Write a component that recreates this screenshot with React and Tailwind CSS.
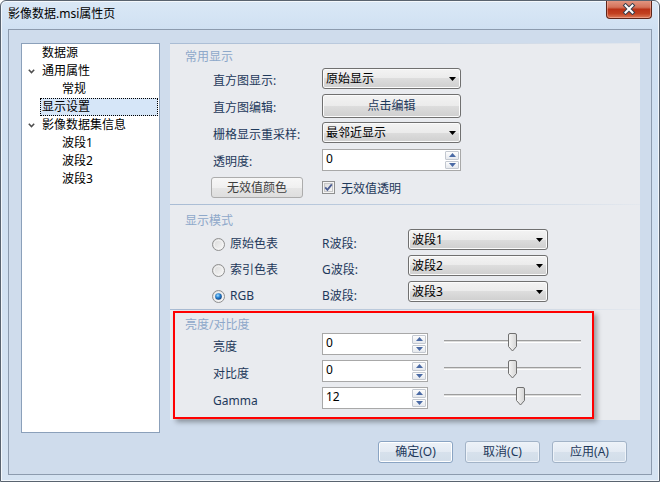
const navy = 'text-[#1e395b]';

function Arrow() {
  return (
    <svg width="7" height="4" viewBox="0 0 7 4">
      <polygon points="0,0 7,0 3.5,4" fill="#000" />
    </svg>
  );
}

function Combo({ text, className = '' }) {
  return (
    <div
      className={`flex h-[21px] items-center justify-between rounded-[3px] border border-[#707070] bg-[linear-gradient(#f3f3f3,#ebebeb_50%,#dddddd_50%,#cfcfcf)] pl-[3px] pr-[4px] text-black shadow-[inset_0_0_0_1px_#fbfbfb] ${className}`}
    >
      <span className="leading-[16px]">{text}</span>
      <Arrow />
    </div>
  );
}

function SpinBtn({ up }) {
  return (
    <div className="flex flex-1 items-center justify-center rounded-[1px] border border-[#c3c8d0] bg-[linear-gradient(#fdfdfd,#e6e9ee)]">
      <svg width="7" height="4" viewBox="0 0 7 4">
        <polygon points={up ? '0,4 7,4 3.5,0' : '0,0 7,0 3.5,4'} fill="#4a6aa5" />
      </svg>
    </div>
  );
}

function Spin({ value, className = '' }) {
  return (
    <div className={`flex h-[22px] border border-[#a8a8a8] bg-white ${className}`}>
      <div className="flex-1 pl-[3px] leading-[18px] text-black">{value}</div>
      <div className="flex w-[15px] flex-col gap-px py-[1px] pr-[1px]">
        <SpinBtn up />
        <SpinBtn />
      </div>
    </div>
  );
}

function Radio({ checked }) {
  return (
    <svg width="13" height="13" viewBox="0 0 13 13">
      <defs>
        <linearGradient id="rb" x1="0" y1="0" x2="1" y2="1">
          <stop offset="0" stopColor="#d6d6d6" />
          <stop offset="1" stopColor="#fbfbfb" />
        </linearGradient>
        <radialGradient id="rd" cx="0.4" cy="0.35" r="0.7">
          <stop offset="0" stopColor="#a9e0ff" />
          <stop offset="0.45" stopColor="#2a86d6" />
          <stop offset="1" stopColor="#0b3a78" />
        </radialGradient>
      </defs>
      <circle cx="6.5" cy="6.5" r="6" fill="url(#rb)" stroke="#8f8f8f" />
      <circle cx="6.5" cy="6.5" r="4.3" fill="none" stroke="#f4f4f4" />
      {checked && <circle cx="6.5" cy="6.5" r="3.3" fill="url(#rd)" />}
    </svg>
  );
}

function Checkbox() {
  return (
    <svg width="13" height="13" viewBox="0 0 13 13">
      <defs>
        <linearGradient id="cb" x1="0" y1="0" x2="1" y2="1">
          <stop offset="0" stopColor="#dcdcdc" />
          <stop offset="1" stopColor="#f8f8f8" />
        </linearGradient>
      </defs>
      <rect x="0.5" y="0.5" width="12" height="12" fill="#f4f4f4" stroke="#8e8f8f" />
      <rect x="2.5" y="2.5" width="8" height="8" fill="url(#cb)" stroke="#c8c8c8" />
      <path d="M3.2 6.4 L5.4 8.8 L9.8 3.4" fill="none" stroke="#4c5e93" strokeWidth="1.8" />
    </svg>
  );
}

function Slider({ thumb }) {
  return (
    <div className="relative ml-[16px] h-[22px] w-[137px]">
      <div className="mt-[7px] h-[3px] w-full border-t border-[#9d9d9d] border-b border-b-white bg-[#dcdcdc]" />
      <svg
        width="11"
        height="19"
        viewBox="0 0 11 19"
        className={`absolute top-0 ${thumb}`}
      >
        <defs>
          <linearGradient id="tg" x1="0" y1="0" x2="1" y2="0">
            <stop offset="0" stopColor="#f6f6f6" />
            <stop offset="1" stopColor="#d5d5d5" />
          </linearGradient>
        </defs>
        <path
          d="M1.5 2 Q1.5 0.5 3 0.5 H8 Q9.5 0.5 9.5 2 V13.5 L5.5 18 L1.5 13.5 Z"
          fill="url(#tg)"
          stroke="#707070"
        />
      </svg>
    </div>
  );
}

function Chevron() {
  return (
    <svg width="7" height="5" viewBox="0 0 7 5">
      <path d="M0.8 0.8 L3.5 3.6 L6.2 0.8" fill="none" stroke="#4d4d4d" strokeWidth="1.5" />
    </svg>
  );
}

function TreeRow({ text, indent, chevron, selected }) {
  return (
    <div className="flex h-[18px] items-center">
      <div className={`flex shrink-0 items-center pl-[6px] ${indent ? 'w-[38px]' : 'w-[18px]'}`}>
        {chevron && <Chevron />}
      </div>
      <div
        className={`mr-[1px] flex h-[18px] flex-1 items-center border px-[1px] leading-[16px] text-black ${
          selected ? 'border-dotted border-black bg-[#d6e6f8]' : 'border-transparent'
        }`}
      >
        {text}
      </div>
    </div>
  );
}

function SectionLine() {
  return <div className="h-px bg-[linear-gradient(90deg,#a9bcd4,#c6d3e3_60%,#e4e8ee)]" />;
}

function Title({ children, className = '' }) {
  return <div className={`pl-[15px] leading-[16px] text-[#8ea8ca] ${className}`}>{children}</div>;
}

function WinButton({ children, primary }) {
  return (
    <div
      className={`flex h-[22px] w-[75px] items-center justify-center rounded-[3px] border ${navy} bg-[linear-gradient(#edf2f8,#e3eaf3_50%,#d7e1ec_50%,#d2dde9)] ${
        primary
          ? 'border-[#8aa4c3] shadow-[inset_0_0_0_1px_#ffffff]'
          : 'border-[#a2b3c7] shadow-[inset_0_0_0_1px_#eef3f9]'
      }`}
    >
      {children}
    </div>
  );
}

export default function App() {
  return (
    <div className="h-[482px] w-[660px] overflow-hidden rounded-t-[6px] border border-[#59636f] bg-[linear-gradient(#dae8f6,#cfe0f2_30px,#d5e3f2)] font-['Noto_Sans','Noto_Sans_CJK_SC',sans-serif] text-[12px] shadow-[inset_0_0_0_1px_rgba(255,255,255,0.7)]">
      {/* title bar */}
      <div className="flex h-[28px] items-start justify-between">
        <div className="pl-[7px] pt-[5px] leading-[16px] text-black">影像数据.msi属性页</div>
        <div className="-mt-px mr-[7px] flex h-[19px] w-[46px] items-center justify-center rounded-b-[4px] border border-t-0 border-[#5e2418] bg-[linear-gradient(#e49a86,#d4735a_40%,#b93217_52%,#c2401f_75%,#dc7a58)] shadow-[inset_0_0_0_1px_rgba(255,200,185,0.45)]">
          <svg width="14" height="12" viewBox="0 0 14 12">
            <path d="M3.5 2.5 L10.5 9.5 M10.5 2.5 L3.5 9.5" stroke="#3a3f4d" strokeWidth="4" strokeLinecap="square" />
            <path d="M3.5 2.5 L10.5 9.5 M10.5 2.5 L3.5 9.5" stroke="#ffffff" strokeWidth="2" strokeLinecap="square" />
          </svg>
        </div>
      </div>

      {/* client area */}
      <div className="mx-[7px] h-[446px] border border-[#8c9bae] bg-[#cfdcec] pl-[12px] pt-[13px]">
        <div className="flex items-start">
          {/* tree */}
          <div className="h-[390px] w-[139px] border border-[#8ba0ba] bg-white">
            <TreeRow text="数据源" />
            <TreeRow text="通用属性" chevron />
            <TreeRow text="常规" indent />
            <TreeRow text="显示设置" selected />
            <TreeRow text="影像数据集信息" chevron />
            <TreeRow text="波段1" indent />
            <TreeRow text="波段2" indent />
            <TreeRow text="波段3" indent />
          </div>

          {/* settings panel */}
          <div className="relative ml-[10px] h-[377px] w-[470px] bg-[#e9ebef]">
            {/* 常用显示 */}
            <div className="h-[161px]">
              <SectionLine />
              <Title className="mt-[5px]">常用显示</Title>
              <div className={`pl-[43px] ${navy}`}>
                <div className="mt-[3px] flex items-center">
                  <div className="mt-[4px] w-[109px] leading-[16px]">直方图显示:</div>
                  <Combo text="原始显示" className="w-[139px]" />
                </div>
                <div className="mt-[5px] flex items-center">
                  <div className="mt-[3px] w-[109px] leading-[16px]">直方图编辑:</div>
                  <div className="flex h-[24px] w-[139px] items-center justify-center rounded-[3px] border border-[#707070] bg-[linear-gradient(#f3f3f3,#ebebeb_50%,#dddddd_50%,#cfcfcf)] shadow-[inset_0_0_0_1px_#fbfbfb]">
                    点击编辑
                  </div>
                </div>
                <div className="mt-[4px] flex items-center">
                  <div className="mt-[5px] w-[109px] leading-[16px]">栅格显示重采样:</div>
                  <Combo text="最邻近显示" className="w-[139px]" />
                </div>
                <div className="mt-[6px] flex items-center">
                  <div className="mt-[4px] w-[109px] leading-[16px]">透明度:</div>
                  <Spin value="0" className="w-[139px]" />
                </div>
                <div className="mt-[6px] flex items-center">
                  <div className="-ml-[2px] mr-[19px] flex h-[21px] w-[92px] items-center justify-center rounded-[3px] border border-[#acacac] bg-[linear-gradient(#f7f7f7,#f0f0f0_50%,#e6e6e6_50%,#dedede)] text-[#3e3e3e]">
                    无效值颜色
                  </div>
                  <Checkbox />
                  <span className="ml-[6px] mt-[2px] leading-[16px]">无效值透明</span>
                </div>
              </div>
            </div>

            {/* 显示模式 */}
            <div className="h-[105px]">
              <SectionLine />
              <Title className="mt-[8px]">显示模式</Title>
              <div className={`pl-[42px] ${navy}`}>
                {[
                  ['原始色表', 'R波段:', '波段1', false],
                  ['索引色表', 'G波段:', '波段2', false],
                  ['RGB', 'B波段:', '波段3', true],
                ].map(([label, band, value, checked]) => (
                  <div key={band} className="flex h-[26px] items-start">
                    <div className="mt-[7px] flex h-[16px] items-center">
                      <div className="w-[18px]">
                        <Radio checked={checked} />
                      </div>
                      <div className="w-[92px] leading-[16px]">{label}</div>
                      <div className="w-[86px] leading-[16px]">{band}</div>
                    </div>
                    <Combo text={value} className="w-[140px]" />
                  </div>
                ))}
              </div>
            </div>

            {/* 亮度/对比度 */}
            <div>
              <SectionLine />
              <Title className="mt-[7px]">亮度/对比度</Title>
              <div className={`pl-[43px] ${navy}`}>
                {[
                  ['亮度', '0', 'left-[63px]'],
                  ['对比度', '0', 'left-[63px]'],
                  ['Gamma', '12', 'left-[71px]'],
                ].map(([label, value, thumb], i) => (
                  <div key={label} className={`flex items-start ${i ? 'mt-[5px]' : ''}`}>
                    <div className="mt-[6px] w-[109px] leading-[16px]">{label}</div>
                    <Spin value={value} className="w-[106px]" />
                    <Slider thumb={thumb} />
                  </div>
                ))}
              </div>
            </div>

            {/* annotation box */}
            <div className="absolute left-[3px] top-[268px] h-[108px] w-[421px] border-2 border-[#ff0000] shadow-[3px_3px_5px_rgba(0,0,0,0.35)]" />
          </div>
        </div>

        {/* dialog buttons */}
        <div className="mt-[8px] flex justify-end gap-[12px] pr-[24px]">
          <WinButton primary>确定(O)</WinButton>
          <WinButton>取消(C)</WinButton>
          <WinButton>应用(A)</WinButton>
        </div>
      </div>
    </div>
  );
}
